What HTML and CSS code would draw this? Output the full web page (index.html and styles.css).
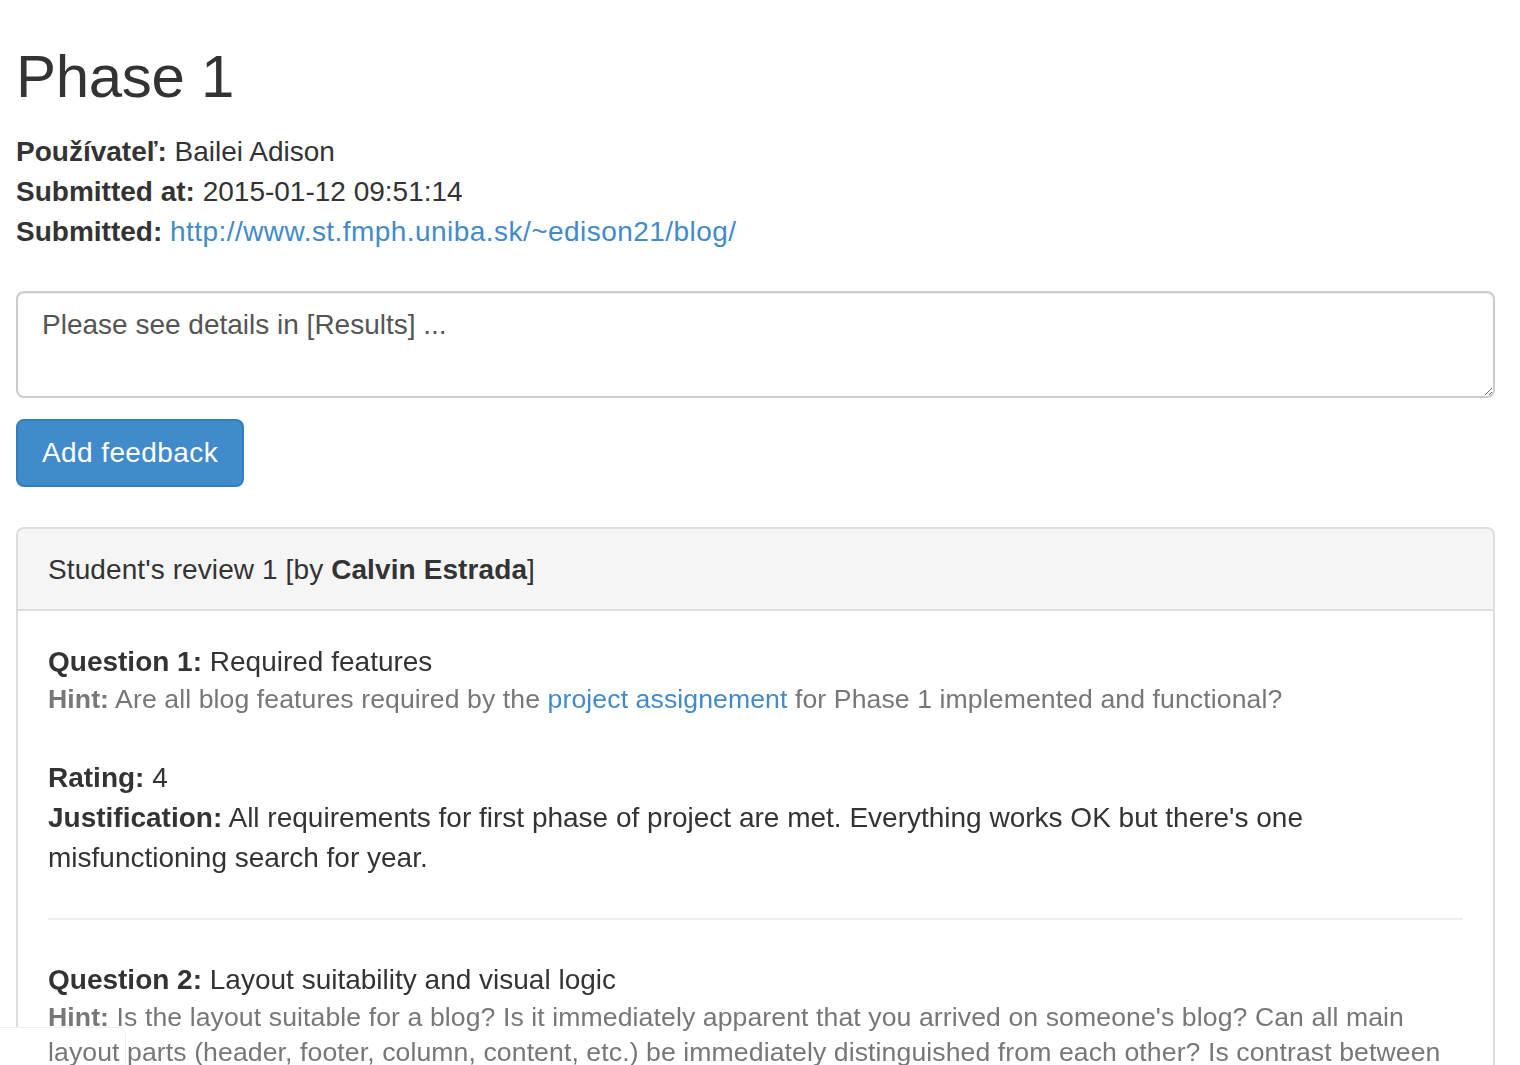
FILE: index.html
```html
<!DOCTYPE html>
<html lang="sk">
<head>
<meta charset="utf-8">
<title>Phase 1</title>
<link rel="stylesheet" href="styles.css">
</head>
<body>
<div class="page">
  <h2 class="title">Phase 1</h2>
  <div class="meta">
    <div><strong>Používateľ:</strong> Bailei Adison</div>
    <div><strong>Submitted at:</strong> 2015-01-12 09:51:14</div>
    <div><strong>Submitted:</strong> <a class="url" href="#">http://www.st.fmph.uniba.sk/~edison21/blog/</a></div>
  </div>
  <form class="feedback">
    <textarea class="form-control" rows="2">Please see details in [Results] ...</textarea>
    <button type="button" class="btn">Add feedback</button>
  </form>
  <div class="panel">
    <div class="panel-heading">Student's review 1 [by <strong>Calvin Estrada</strong>]</div>
    <div class="panel-body">
      <div class="question">
        <div class="q-title"><strong>Question 1:</strong> Required features</div>
        <div class="hint"><strong>Hint:</strong> Are all blog features required by the <a href="#">project assignement</a> for Phase 1 implemented and functional?</div>
        <div class="answer">
          <div><strong>Rating:</strong> 4</div>
          <div><strong>Justification:</strong> All requirements for first phase of project are met. Everything works OK but there's one misfunctioning search for year.</div>
        </div>
      </div>
      <hr class="sep">
      <div class="question">
        <div class="q-title"><strong>Question 2:</strong> Layout suitability and visual logic</div>
        <div class="hint"><strong>Hint:</strong> Is the layout suitable for a blog? Is it immediately apparent that you arrived on someone's blog? Can all main layout parts (header, footer, column, content, etc.) be immediately distinguished from each other? Is contrast between text and background sufficient? Is the layout consistent across all pages?</div>
      </div>
    </div>
  </div>
</div>
<div class="corner-box"></div>
</body>
</html>
```

FILE: styles.css
```css
html, body {
  margin: 0;
  padding: 0;
  background: #fff;
}
body {
  font-family: "Liberation Sans", Arial, sans-serif;
  font-size: 28px;
  line-height: 40px;
  color: #333;
}
a {
  color: #428bca;
  text-decoration: none;
}
strong {
  font-weight: bold;
}
.page {
  padding: 0 25px 0 16px;
}
.title {
  font-size: 60px;
  font-weight: 500;
  line-height: 66px;
  margin: 44px 0 22px 0;
  letter-spacing: -0.3px;
}
.meta {
  margin-bottom: 39px;
}
.url {
  letter-spacing: 0.45px;
}
.feedback {
  display: flex;
  flex-direction: column;
  align-items: flex-start;
  gap: 21px;
  margin: 0 0 40px 0;
}
.form-control {
  box-sizing: border-box;
  width: 100%;
  height: 107px;
  padding: 12px 24px;
  font-family: inherit;
  font-size: 28px;
  line-height: 40px;
  color: #555;
  border: 2px solid #ccc;
  border-radius: 8px;
  background: #fff;
  box-shadow: inset 0 1px 1px rgba(0,0,0,.075);
  resize: vertical;
  display: block;
}
.btn {
  font-family: inherit;
  font-size: 28px;
  line-height: 40px;
  padding: 12px 24px;
  letter-spacing: 0.4px;
  color: #fff;
  background: #428bca;
  border: 2px solid #357ebd;
  border-radius: 8px;
  cursor: pointer;
}
.panel {
  border: 2px solid #ddd;
  border-radius: 8px;
  background: #fff;
}
.panel-heading {
  background: #f5f5f5;
  border-bottom: 2px solid #ddd;
  padding: 21px 30px 19px;
  border-radius: 6px 6px 0 0;
  letter-spacing: 0.1px;
}
.panel-body {
  padding: 31px 30px 30px;
  position: relative;
  z-index: 2;
}
.hint {
  color: #777;
  font-size: 26.6px;
  line-height: 35.5px;
  letter-spacing: 0.1px;
}
.answer {
  margin-top: 40px;
}
.sep {
  border: 0;
  border-top: 2px solid #eee;
  margin: 40px 0;
}
.corner-box {
  position: fixed;
  z-index: 1;
  left: -2px;
  bottom: -20px;
  width: 126px;
  height: 56px;
  background: #fff;
  border: 1px solid #eee;
  border-radius: 0 8px 0 0;
}
```
